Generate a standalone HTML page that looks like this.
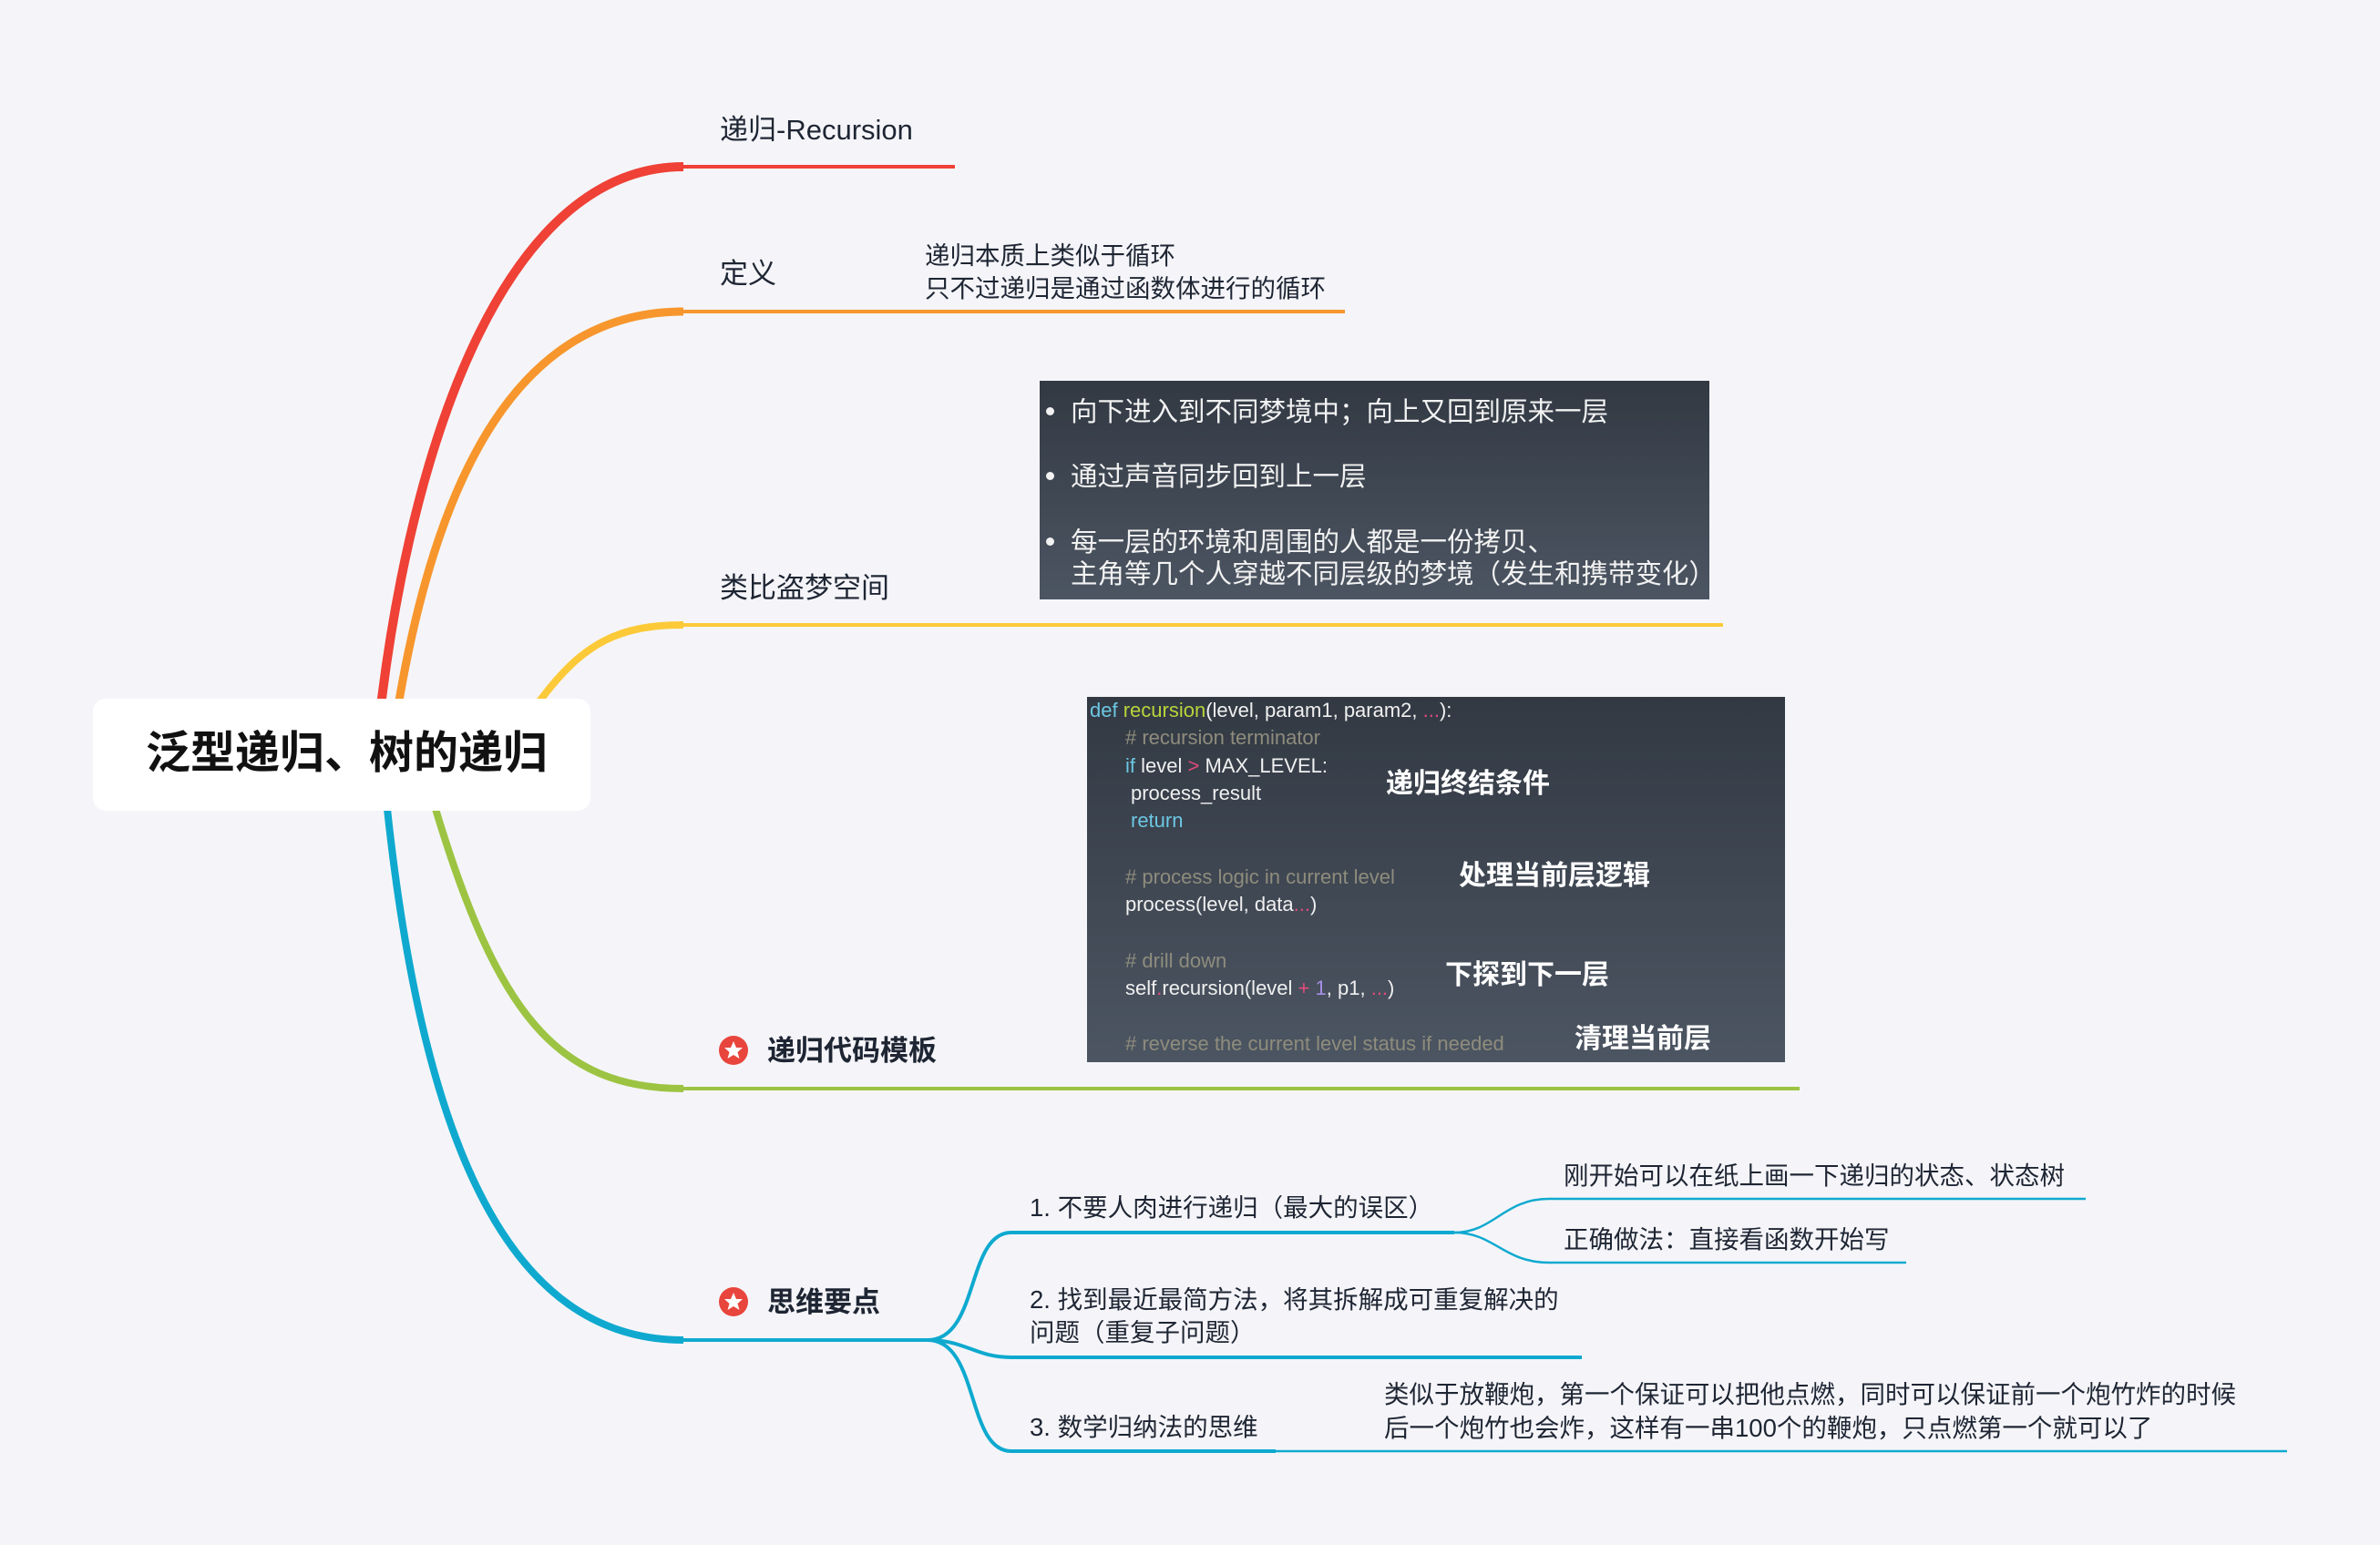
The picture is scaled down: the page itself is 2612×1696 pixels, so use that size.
<!DOCTYPE html>
<html><head><meta charset="utf-8"><style>
html,body{margin:0;padding:0}
body{width:2612px;height:1696px;background:#f5f5f9;position:relative;overflow:hidden;font-family:"Liberation Sans","Noto Sans CJK SC",sans-serif;color:#1e2533}
.t{position:absolute;white-space:nowrap;line-height:1.25}
svg{position:absolute;left:0;top:0}
.box{position:absolute;background:linear-gradient(#323943,#4c5562);}
.code{position:absolute;font-family:"Liberation Sans","Noto Sans CJK SC",sans-serif;font-size:22px;color:#f0f0f0;white-space:pre;line-height:1.2}
.cm{color:#8e8c7c}.kw{color:#6cc7e2}.fn{color:#b9d43a}.pk{color:#e24a7c}.pu{color:#a890e6}
.lab{position:absolute;color:#fff;font-weight:bold;font-size:30px;white-space:nowrap;line-height:1.2}
.bl{position:absolute;color:#f2f2f2;font-size:29.5px;line-height:1.2;white-space:nowrap}
.dot{position:absolute;width:9px;height:9px;border-radius:50%;background:#f2f2f2}
</style></head><body>
<svg width="2612" height="1696" fill="none">
<path d="M418,775 C455,470 560,183 750,183" stroke="#ef4136" stroke-width="10"/>
<path d="M750,183 L1048,183" stroke="#ef4136" stroke-width="4"/>
<path d="M437,775 C480,520 570,342 750,342" stroke="#f7962d" stroke-width="9"/>
<path d="M750,342 L1476,342" stroke="#f7962d" stroke-width="4"/>
<path d="M592,770 C640,705 680,686 750,686" stroke="#fcca39" stroke-width="8"/>
<path d="M750,686 L1891,686" stroke="#fcca39" stroke-width="4"/>
<path d="M478,888 C545,1110 610,1195 750,1195" stroke="#9cc442" stroke-width="8"/>
<path d="M750,1195 L1975,1195" stroke="#9cc442" stroke-width="4"/>
<path d="M425,888 C465,1260 560,1471 750,1471" stroke="#0fa9cf" stroke-width="8"/>
<path d="M750,1471 L1018,1471" stroke="#0fa9cf" stroke-width="4"/>
<path d="M1018,1471 C1075,1471 1060,1353 1110,1353 L1596,1353" stroke="#0fa9cf" stroke-width="4"/>
<path d="M1018,1471 C1060,1471 1070,1490 1110,1490 L1736,1490" stroke="#0fa9cf" stroke-width="4"/>
<path d="M1018,1471 C1075,1471 1060,1593 1110,1593 L1400,1593" stroke="#0fa9cf" stroke-width="4"/>
<path d="M1400,1593 L2510,1593" stroke="#0fa9cf" stroke-width="2.5"/>
<path d="M1596,1353 C1640,1353 1650,1316 1700,1316 L2289,1316" stroke="#0fa9cf" stroke-width="2.5"/>
<path d="M1596,1353 C1640,1353 1650,1386 1700,1386 L2092,1386" stroke="#0fa9cf" stroke-width="2.5"/>
<circle cx="805" cy="1153" r="16" fill="#e8453c"/>
<polygon points="805,1143 808,1150 815,1150 809.5,1155 811.5,1162 805,1158 798.5,1162 800.5,1155 795,1150 802,1150" fill="#fff"/>
<circle cx="805" cy="1429" r="16" fill="#e8453c"/>
<polygon points="805,1419 808,1426 815,1426 809.5,1431 811.5,1438 805,1434 798.5,1438 800.5,1431 795,1426 802,1426" fill="#fff"/>
</svg>

<div style="position:absolute;left:102px;top:767px;width:546px;height:123px;background:#fff;border-radius:14px"></div>
<div class="t" style="left:160px;top:797px;font-size:49px;font-weight:bold;color:#111">泛型递归、树的递归</div>

<div class="t" style="left:790px;top:124px;font-size:31px">递归-Recursion</div>
<div class="t" style="left:790px;top:282px;font-size:31px">定义</div>
<div class="t" style="left:1015px;top:263px;font-size:27.5px;line-height:36px">递归本质上类似于循环<br>只不过递归是通过函数体进行的循环</div>
<div class="t" style="left:790px;top:627px;font-size:31px">类比盗梦空间</div>
<div class="t" style="left:842px;top:1135px;font-size:31px;font-weight:bold">递归代码模板</div>
<div class="t" style="left:842px;top:1411px;font-size:31px;font-weight:bold">思维要点</div>

<div class="box" style="left:1141px;top:418px;width:735px;height:240px"></div>
<div class="dot" style="left:1148px;top:447px"></div>
<div class="dot" style="left:1148px;top:518px"></div>
<div class="dot" style="left:1148px;top:590px"></div>
<div class="bl" style="left:1175px;top:435px">向下进入到不同梦境中；向上又回到原来一层</div>
<div class="bl" style="left:1175px;top:506px">通过声音同步回到上一层</div>
<div class="bl" style="left:1175px;top:578px">每一层的环境和周围的人都是一份拷贝、</div>
<div class="bl" style="left:1175px;top:613px">主角等几个人穿越不同层级的梦境（发生和携带变化）</div>

<div class="box" style="left:1193px;top:765px;width:766px;height:401px"></div>
<div class="code" style="left:1196px;top:767px"><span class="kw">def</span> <span class="fn">recursion</span>(level, param1, param2, <span class="pk">...</span>):</div>
<div class="code" style="left:1235px;top:797px"><span class="cm"># recursion terminator</span></div>
<div class="code" style="left:1235px;top:828px"><span class="kw">if</span> level <span class="pk">&gt;</span> MAX_LEVEL:</div>
<div class="code" style="left:1241px;top:858px">process_result</div>
<div class="code" style="left:1241px;top:888px"><span class="kw">return</span></div>
<div class="code" style="left:1235px;top:950px"><span class="cm"># process logic in current level</span></div>
<div class="code" style="left:1235px;top:980px">process(level, data<span class="pk">...</span>)</div>
<div class="code" style="left:1235px;top:1042px"><span class="cm"># drill down</span></div>
<div class="code" style="left:1235px;top:1072px">self<span class="pk">.</span>recursion(level <span class="pk">+</span> <span class="pu">1</span>, p1, <span class="pk">...</span>)</div>
<div class="code" style="left:1235px;top:1133px"><span class="cm"># reverse the current level status if needed</span></div>
<div class="lab" style="left:1521px;top:843px">递归终结条件</div>
<div class="lab" style="left:1601px;top:944px">处理当前层逻辑</div>
<div class="lab" style="left:1586px;top:1053px">下探到下一层</div>
<div class="lab" style="left:1728px;top:1123px">清理当前层</div>

<div class="t" style="left:1130px;top:1309px;font-size:27.5px">1. 不要人肉进行递归（最大的误区）</div>
<div class="t" style="left:1716px;top:1274px;font-size:27.5px">刚开始可以在纸上画一下递归的状态、状态树</div>
<div class="t" style="left:1716px;top:1344px;font-size:27.5px">正确做法：直接看函数开始写</div>
<div class="t" style="left:1130px;top:1409px;font-size:27.5px;line-height:36px">2. 找到最近最简方法，将其拆解成可重复解决的<br>问题（重复子问题）</div>
<div class="t" style="left:1130px;top:1550px;font-size:27.5px">3. 数学归纳法的思维</div>
<div class="t" style="left:1519px;top:1512px;font-size:27.5px;line-height:37px">类似于放鞭炮，第一个保证可以把他点燃，同时可以保证前一个炮竹炸的时候<br>后一个炮竹也会炸，这样有一串100个的鞭炮，只点燃第一个就可以了</div>
</body></html>
